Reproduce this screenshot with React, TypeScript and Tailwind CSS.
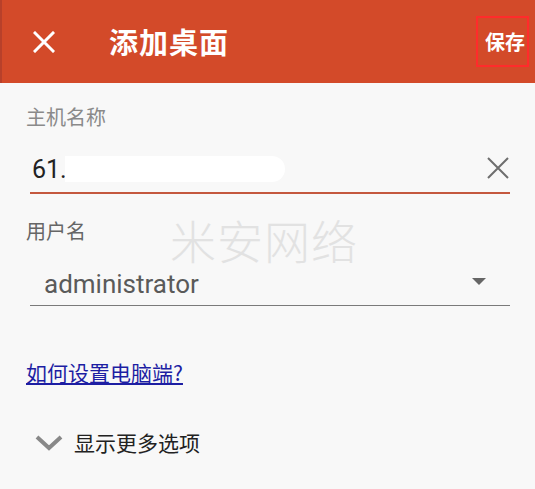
import React from "react";

export default function App() {
  const cjk = { fontFamily: '"Noto Sans CJK SC", "Noto Sans", sans-serif' };
  const rob = { fontFamily: 'Roboto, "Noto Sans CJK SC", sans-serif' };
  return (
    <div className="w-[535px] h-[489px] bg-[#f8f8f8] overflow-hidden flex flex-col" style={cjk}>
      <div className="h-[83px] bg-[#d34a29] flex items-center border-l-2 border-[#b8402a]">
        <svg width="22" height="22" viewBox="0 0 22 22" className="ml-[31px]">
          <path d="M2 2 L20 20 M20 2 L2 20" stroke="#fff" strokeWidth="3" strokeLinecap="square" />
        </svg>
        <div className="ml-[54px] text-[29px] font-bold text-white leading-none tracking-[1px]">添加桌面</div>
        <div className="ml-auto mr-[6px] w-[53px] h-[51px] border-2 border-[#ff2b2b] flex items-center justify-end pr-[2px]">
          <span className="text-[20px] font-bold text-white leading-none">保存</span>
        </div>
      </div>

      <div className="px-[26px] pt-[24px]">
        <div className="text-[20px] text-[#8a8a8a] leading-none">主机名称</div>
        <div className="mt-[25px] ml-[4px] mr-[-1px] flex items-center h-[42px] border-b-2 border-[#c4583f]">
          <div className="flex items-center text-[25px] text-[#222] leading-none pl-[2px] pb-[6px]" style={rob}>
            <span>61.</span>
            <span className="ml-[-2px] w-[220px] h-[26px] bg-white rounded-r-full"></span>
          </div>
          <svg width="24" height="24" viewBox="0 0 24 24" className="ml-auto mr-[0px] mb-[8px]">
            <path d="M2 2 L22 22 M22 2 L2 22" stroke="#6e6e6e" strokeWidth="2" />
          </svg>
        </div>

        <div className="relative mt-[27px] text-[20px] text-[#666] leading-none">
          用户名
          <div className="absolute left-[144px] top-[-5px] text-[46px] font-light text-[#e2e2e2] tracking-[1px] leading-none">米安网络</div>
        </div>
        <div className="mt-[27px] ml-[4px] mr-[-1px] flex items-center h-[38px] border-b border-[#7a7a7a]">
          <span className="pl-[14px] pb-[6px] text-[26px] text-[#5a5a5a] leading-none" style={rob}>administrator</span>
          <svg width="14" height="7" viewBox="0 0 14 7" className="ml-auto mr-[24px] mb-[10px]">
            <path d="M0 0 L14 0 L7 7 Z" fill="#666" />
          </svg>
        </div>

        <div className="mt-[56px] text-[21px] text-[#1d1ea3] underline underline-offset-2 leading-none">如何设置电脑端?</div>

        <div className="mt-[49px] ml-[9px] flex items-center">
          <svg width="28" height="16" viewBox="0 0 28 16">
            <path d="M2 2 L14 13 L26 2" stroke="#888" strokeWidth="4" fill="none" />
          </svg>
          <span className="ml-[11px] text-[21px] text-[#222] leading-none">显示更多选项</span>
        </div>
      </div>
    </div>
  );
}
